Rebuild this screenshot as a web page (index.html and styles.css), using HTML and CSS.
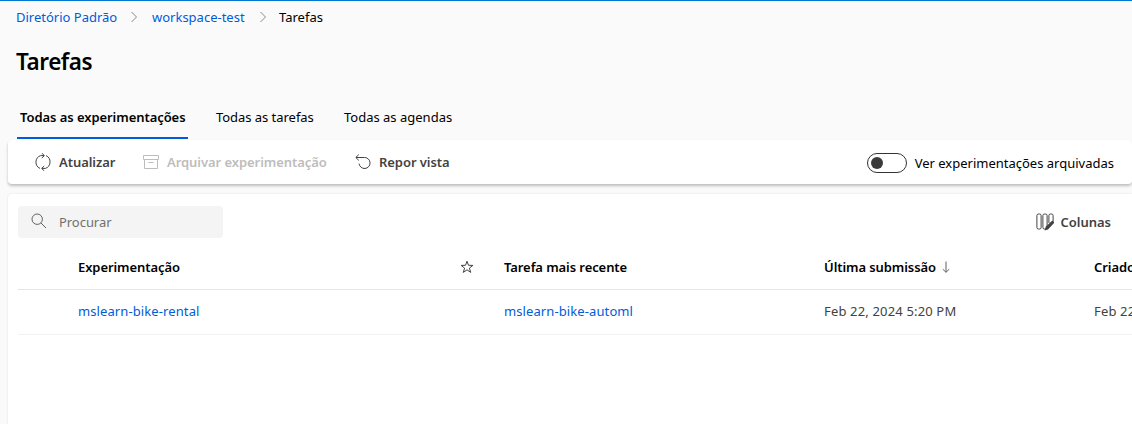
FILE: index.html
```html
<!DOCTYPE html>
<html lang="pt">
<head>
<meta charset="utf-8">
<title>Tarefas</title>
<link rel="stylesheet" href="styles.css">
</head>
<body>
<div class="page">
  <nav class="breadcrumb">
    <a class="link crumb-root">Diretório Padrão</a>
    <svg class="chevron" viewBox="0 0 8 12"><path d="M1.5 1 6.5 6l-5 5"/></svg>
    <a class="link crumb-space">workspace-test</a>
    <svg class="chevron" viewBox="0 0 8 12"><path d="M1.5 1 6.5 6l-5 5"/></svg>
    <span class="crumb-here">Tarefas</span>
  </nav>
  <h1 class="title">Tarefas</h1>
  <div class="tabs">
    <div class="tab tab-experiments active"><span>Todas as experimentações</span></div>
    <div class="tab tab-jobs"><span>Todas as tarefas</span></div>
    <div class="tab tab-schedules"><span>Todas as agendas</span></div>
  </div>
  <div class="toolbar">
    <div class="command refresh">
      <svg class="icon" viewBox="0 0 18 18"><path d="M6 15.4A6.9 6.9 0 0 1 6.6 2.6H10M7.8.2 10.4 2.6 7.8 5M12 2.6a6.9 6.9 0 0 1-.6 12.8H8M10.2 13 7.6 15.4l2.6 2.4"/></svg>
      <span>Atualizar</span>
    </div>
    <div class="command archive disabled">
      <svg class="icon" viewBox="0 0 18 18"><path d="M1.5 2.5h15v4h-15zM2.5 6.5v9h13v-9M6.5 9.5h5"/></svg>
      <span>Arquivar experimentação</span>
    </div>
    <div class="command reset">
      <svg class="icon" viewBox="0 0 18 18"><path d="M2 4.5h8.6a5.5 5.5 0 1 1-5.5 6.2M4.8 1.6 1.8 4.5l3 2.9"/></svg>
      <span>Repor vista</span>
    </div>
    <div class="switch"><span class="track"><span class="knob"></span></span><span class="switch-label">Ver experimentações arquivadas</span></div>
  </div>
  <div class="panel">
    <div class="panel-head">
      <div class="search">
        <svg class="search-icon" viewBox="0 0 16 16"><circle cx="6.2" cy="6.2" r="5.2"/><path d="m10 10 5 5"/></svg>
        <span class="placeholder">Procurar</span>
      </div>
      <div class="columns">
        <svg class="columns-icon" viewBox="0 0 18 18"><rect x=".9" y="1" width="4.2" height="15" rx="1.5"/><rect x="6.9" y="1" width="4.2" height="15" rx="1.5"/><path d="M12.9 10V2.5q0-1.5 1.5-1.5h1.2q1.5 0 1.5 1.5V8"/><path class="pencil" d="m8.7 17.6 1-3.8 5.8-5.6q1.2-.8 2.2.2.8 1.1-.1 2.2l-5.6 5.8z"/></svg>
        <span>Colunas</span>
      </div>
    </div>
    <div class="row head">
      <span class="h-exp">Experimentação</span>
      <svg class="star" viewBox="0 0 14 14"><path d="m7 1.2 1.5 4.1 4.4.1-3.5 2.7 1.3 4.3L7 9.8l-3.7 2.6 1.3-4.3L1.1 5.4l4.4-.1z"/></svg>
      <span class="h-job">Tarefa mais recente</span>
      <span class="sorted"><span class="h-sub">Última submissão</span><svg class="arrow" viewBox="0 0 8 12"><path d="M4 .5v10.7M.8 8.2 4 11.3l3.2-3.1"/></svg></span>
      <span class="h-created">Criado em</span>
    </div>
    <div class="row body">
      <a class="link c-exp">mslearn-bike-rental</a>
      <span></span>
      <a class="link c-job">mslearn-bike-automl</a>
      <span class="date">Feb 22, 2024 5:20 PM</span>
      <span class="date">Feb 22, 2024 5:20 PM</span>
    </div>
  </div>
</div>
</body>
</html>
```
FILE: styles.css
```css
* { box-sizing: border-box; }
body {
  margin: 0;
  background: #fafafa;
  color: #000;
  font: 13px/20px "Noto Sans", "Open Sans", sans-serif;
  overflow: hidden;
}
svg { fill: none; stroke: #424242; stroke-width: 1; flex: none; }
span, a { white-space: nowrap; }
.page { height: 424px; border-top: 1px solid #0078d4; display: flex; flex-direction: column; overflow: hidden; }
.link { color: #015cda; }
.breadcrumb { display: flex; align-items: center; height: 32px; padding-left: 16px; }
.chevron { width: 8px; height: 12px; stroke: #8a8a8a; }
.crumb-root { width: 114px; }
.crumb-space { width: 107px; margin-left: 14px; }
.crumb-here { margin-left: 12px; }
.title { margin: 13px 0 0 16px; font-size: 22.5px; line-height: 32px; font-weight: 600; height: 32px; letter-spacing: -.45px; }
.tabs { display: flex; margin-top: 19px; padding-left: 17px; height: 42px; }
.tab { height: 42px; padding: 10px 3px 0; }
.tab-experiments { width: 171px; margin-right: 25px; font-weight: 600; letter-spacing: -.06px; border-bottom: 2px solid #015cda; }
.tab-jobs { width: 128px; letter-spacing: -.04px; }
.toolbar {
  display: flex; align-items: center; flex: none;
  height: 44px; margin: 1px 0 0 8px; padding: 0 18px 0 26px;
  background: #fff; border-radius: 4px;
  box-shadow: 0 2px 3px rgba(0,0,0,.24);
}
.command { display: flex; align-items: center; font-weight: 600; letter-spacing: -.06px; color: #424242; }
.command .icon { width: 18px; height: 18px; margin-right: 7px; }
.refresh { width: 108px; }
.archive { width: 212px; }
.disabled { color: #bdbdbd; }
.disabled svg { stroke: #bdbdbd; }
.switch { display: flex; align-items: center; margin-left: auto; padding-top: 2px; }
.track { width: 40px; height: 20px; border: 1px solid #333; border-radius: 10px; margin-right: 8px; padding: 3px; }
.knob { display: block; width: 12px; height: 12px; border-radius: 50%; background: #3b3b3b; }
.panel {
  flex: 1; margin: 10px 0 0 8px; padding: 12px 0 0 10px;
  background: #fff; border-radius: 4px 0 0 0; box-shadow: 0 0 2px rgba(0,0,0,.12);
}
.panel-head { display: flex; justify-content: space-between; height: 40px; padding-right: 21px; }
.search { display: flex; width: 205px; height: 32px; padding: 6px 13px; background: #f4f4f4; border-radius: 4px; }
.search-icon { width: 16px; height: 16px; margin: 1px 12px 0 0; stroke: #616161; }
.placeholder { color: #707070; letter-spacing: -.05px; }
.columns { display: flex; align-items: center; height: 32px; font-weight: 600; color: #424242; }
.columns-icon { width: 18px; height: 18px; margin-right: 6px; }
.pencil { fill: #424242; stroke: none; }
.row { display: grid; grid-template-columns: 382px 44px 320px 270px 200px; align-items: center; padding: 0 0 2px 60px; }
.head { height: 44px; font-weight: 600; letter-spacing: -.08px; border-bottom: 1px solid #e6e6e6; }
.body { height: 45px; border-bottom: 1px solid #f2f2f2; }
.c-exp, .c-job { letter-spacing: .1px; }
.star { width: 14px; height: 14px; }
.sorted { display: flex; align-items: center; }
.arrow { width: 8px; height: 12px; margin-left: 6px; stroke: #616161; }
.date { color: #424242; letter-spacing: .16px; }
```
